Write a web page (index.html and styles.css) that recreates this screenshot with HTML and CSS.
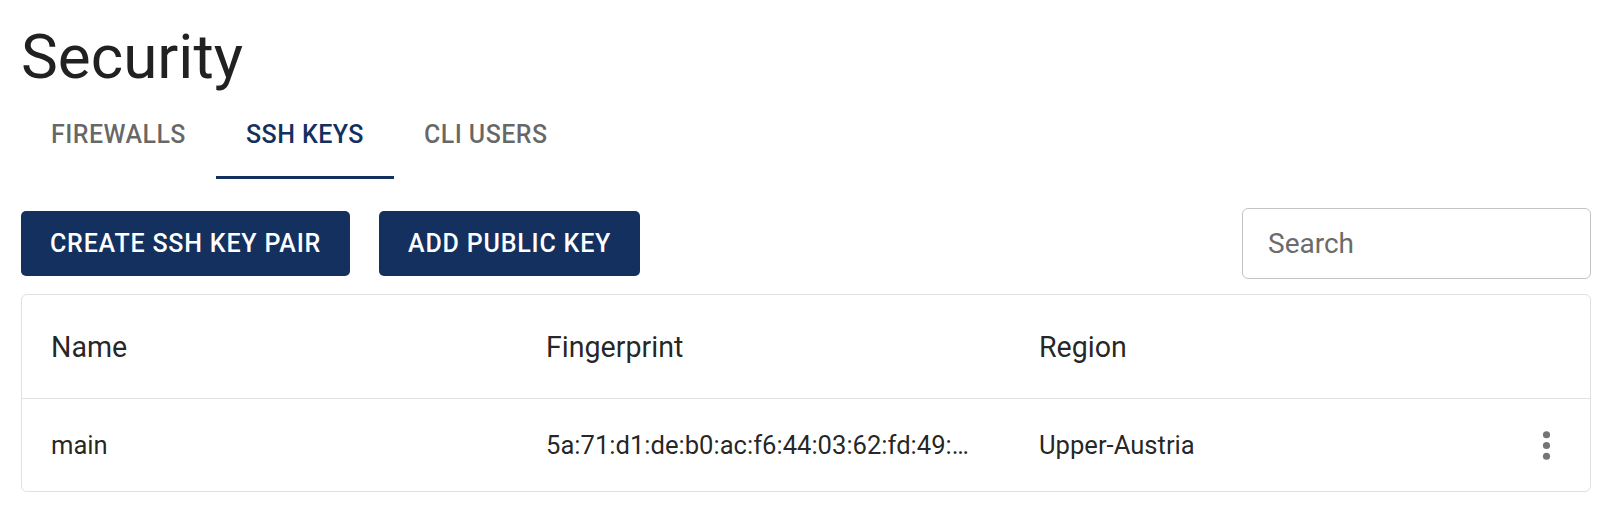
FILE: index.html
```html
<!DOCTYPE html>
<html lang="en">
<head>
<meta charset="utf-8">
<title>Security</title>
<link rel="stylesheet" href="styles.css">
</head>
<body>
<main class="page">
  <h1 class="title">Security</h1>
  <nav class="tabs">
    <div class="tab">FIREWALLS</div>
    <div class="tab tab-active">SSH KEYS</div>
    <div class="tab">CLI USERS</div>
  </nav>
  <div class="toolbar">
    <div class="actions">
      <button class="btn">CREATE SSH KEY PAIR</button>
      <button class="btn">ADD PUBLIC KEY</button>
    </div>
    <input class="search" type="text" placeholder="Search">
  </div>
  <section class="card">
    <div class="row row-head">
      <div class="cell">Name</div>
      <div class="cell">Fingerprint</div>
      <div class="cell">Region</div>
      <div class="cell"></div>
    </div>
    <div class="row row-body">
      <div class="cell">main</div>
      <div class="cell"><span class="fp">5a:71:d1:de:b0:ac:f6:44:03:62:fd:49:8e:2c:17:a3</span></div>
      <div class="cell">Upper-Austria</div>
      <div class="cell cell-menu">
        <svg class="more" viewBox="0 0 24 24" width="43" height="43" aria-hidden="true">
          <circle cx="12" cy="6" r="2"/>
          <circle cx="12" cy="12" r="2"/>
          <circle cx="12" cy="18" r="2"/>
        </svg>
      </div>
    </div>
  </section>
</main>
</body>
</html>
```

FILE: styles.css
```css
html, body {
  margin: 0;
  padding: 0;
  background: #ffffff;
}

body {
  font-family: Roboto, "Liberation Sans", Arial, sans-serif;
  color: rgba(0, 0, 0, 0.87);
}

.page {
  padding: 0 17px 0 21px;
}

.title {
  margin: 21px 0 0 0;
  font-size: 62px;
  line-height: 72px;
  font-weight: 400;
  color: #212121;
}

.tabs {
  display: flex;
}

.tab {
  padding: 27px 30px 26px 30px;
  font-size: 25px;
  line-height: 30px;
  font-weight: 500;
  letter-spacing: 0.45px;
  color: rgba(0, 0, 0, 0.6);
  border-bottom: 3px solid transparent;
}

.tab-active {
  color: #13305f;
  border-bottom-color: #13305f;
}

.toolbar {
  display: flex;
  align-items: center;
  justify-content: space-between;
  margin-top: 29px;
  height: 71px;
}

.actions {
  display: flex;
  gap: 29px;
}

.btn {
  height: 65px;
  padding: 0 29px;
  border: none;
  border-radius: 5px;
  background: #13305f;
  color: #ffffff;
  font-family: Roboto, "Liberation Sans", Arial, sans-serif;
  font-size: 25px;
  font-weight: 500;
  letter-spacing: 0.8px;
}

.search {
  box-sizing: border-box;
  width: 349px;
  height: 71px;
  border: 1px solid #c4c4c4;
  border-radius: 6px;
  padding: 0 0 0 25px;
  font-family: Roboto, "Liberation Sans", Arial, sans-serif;
  font-size: 28px;
  color: rgba(0, 0, 0, 0.87);
  outline: none;
}

.search::placeholder {
  color: #6b6b6b;
  opacity: 1;
}

.card {
  margin-top: 15px;
  border: 1px solid #e0e0e0;
  border-radius: 6px;
}

.row {
  display: grid;
  grid-template-columns: 494px 493px 1fr 86px;
  align-items: center;
}

.row-head {
  height: 103px;
  border-bottom: 1px solid #e0e0e0;
  font-size: 28.6px;
}

.row-body {
  height: 92px;
  font-size: 25.6px;
}

.cell {
  padding-left: 29px;
  white-space: nowrap;
  overflow: hidden;
}

.row .cell:nth-child(2),
.row .cell:nth-child(3) {
  padding-left: 30px;
}

.fp {
  display: block;
  max-width: 432px;
  overflow: hidden;
  text-overflow: ellipsis;
  white-space: nowrap;
}

.cell-menu {
  display: flex;
  justify-content: flex-end;
  padding: 0 22px 0 0;
}

.more {
  display: block;
  fill: #757575;
}
```
